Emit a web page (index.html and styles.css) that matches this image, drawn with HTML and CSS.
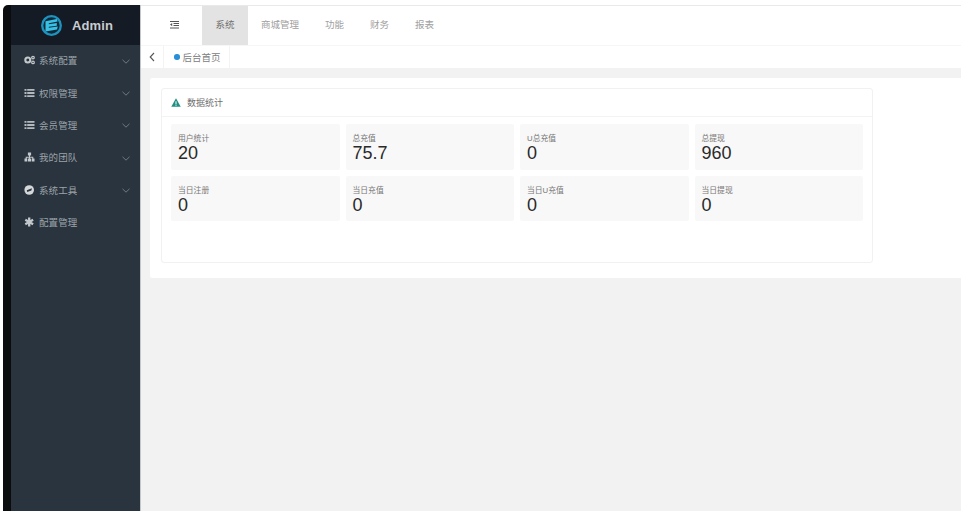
FILE: index.html
```html
<!DOCTYPE html>
<html lang="zh-CN">
<head>
<meta charset="utf-8">
<title>Admin</title>
<link rel="stylesheet" href="styles.css">
</head>
<body>
<div class="app">
  <div class="frame"></div>
  <aside class="sidebar">
    <div class="brand">
      <svg class="logo" viewBox="0 0 21 21" width="21" height="21">
        <circle cx="10.500" cy="10.500" r="9.300" fill="#0e2a38" stroke="#1f93c0" stroke-width="2.300"/>
        <path d="M4.500 6.300 15.800 3.900 16.600 6.400 7.800 8.200 7.800 9.200 15.800 8 15.800 10.800 7.800 11.800 7.800 12.800 16.800 11.600 16 14.600 4.500 16.600Z" fill="#38c0e6"/>
      </svg>
      <span class="brand-name">Admin</span>
    </div>
    <nav class="menu">
      <a class="menu-item">
        <svg class="mi" viewBox="0 0 11 10"><circle cx="3.800" cy="5" r="2.500" fill="none" stroke="#c3c8cc" stroke-width="2.100"/><circle cx="9" cy="2.600" r="1.300" fill="none" stroke="#c3c8cc" stroke-width="1.200"/><circle cx="9" cy="7.400" r="1.300" fill="none" stroke="#c3c8cc" stroke-width="1.200"/></svg>
        <span class="ml">系统配置</span>
        <svg class="chev" viewBox="0 0 8 5"><path d="M.5.8 4 4.2 7.500.8" fill="none" stroke="#77818a" stroke-width=".9"/></svg>
      </a>
      <a class="menu-item">
        <svg class="mi" viewBox="0 0 11 10"><path d="M.5 1h2v1.800h-2zM3.200 1h7.300v1.800H3.200zM.5 4.100h2v1.800h-2zM3.200 4.100h7.300v1.800H3.200zM.5 7.200h2V9h-2zM3.200 7.200h7.300V9H3.200z" fill="#b4b9be"/></svg>
        <span class="ml">权限管理</span>
        <svg class="chev" viewBox="0 0 8 5"><path d="M.5.8 4 4.2 7.500.8" fill="none" stroke="#77818a" stroke-width=".9"/></svg>
      </a>
      <a class="menu-item">
        <svg class="mi" viewBox="0 0 11 10"><path d="M.5 1h2v1.800h-2zM3.200 1h7.300v1.800H3.200zM.5 4.100h2v1.800h-2zM3.200 4.100h7.300v1.800H3.200zM.5 7.200h2V9h-2zM3.200 7.200h7.300V9H3.200z" fill="#b4b9be"/></svg>
        <span class="ml">会员管理</span>
        <svg class="chev" viewBox="0 0 8 5"><path d="M.5.8 4 4.2 7.500.8" fill="none" stroke="#77818a" stroke-width=".9"/></svg>
      </a>
      <a class="menu-item">
        <svg class="mi" viewBox="0 0 11 10"><path d="M3.900.5h3.200v3H6v1.200h3.300v1.800h1.200V9.500H7.700V6.500h.6V5.700H6v.8h1v3H4v-3h1v-.8H2.700v.8h.6v3H.5V6.500h1.200V4.700H5V3.500H3.900z" fill="#c3c8cc"/></svg>
        <span class="ml">我的团队</span>
        <svg class="chev" viewBox="0 0 8 5"><path d="M.5.8 4 4.2 7.500.8" fill="none" stroke="#77818a" stroke-width=".9"/></svg>
      </a>
      <a class="menu-item">
        <svg class="mi" viewBox="0 0 11 10"><circle cx="5.200" cy="5" r="4.800" fill="#d5d8db"/><path d="M2.800 5.200 7.900 3.200 7.400 5.600 3.200 7z" fill="#2a343e"/></svg>
        <span class="ml">系统工具</span>
        <svg class="chev" viewBox="0 0 8 5"><path d="M.5.8 4 4.200 7.500.8" fill="none" stroke="#77818a" stroke-width=".9"/></svg>
      </a>
      <a class="menu-item">
        <svg class="mi" viewBox="0 0 11 10"><path d="M5.200.5v9M1.300 2.750l7.800 4.500M9.100 2.750l-7.800 4.500" stroke="#c3c8cc" stroke-width="2.300" fill="none"/></svg>
        <span class="ml">配置管理</span>
      </a>
    </nav>
  </aside>
  <main class="main">
    <header class="topbar">
      <div class="toggle">
        <svg viewBox="0 0 9 8" width="9" height="8"><path d="M0 .5h9M3.500 2.500H9M3.500 4.500H9M0 7h9" stroke="#555" stroke-width="1" fill="none"/><path d="M2.200 2v3.200L0 3.600z" fill="#555"/></svg>
      </div>
      <a class="tab active">系统</a>
      <a class="tab">商城管理</a>
      <a class="tab">功能</a>
      <a class="tab">财务</a>
      <a class="tab">报表</a>
    </header>
    <div class="tabsbar">
      <div class="back"><svg viewBox="0 0 6 10" width="6" height="10"><path d="M5 1 1.200 5 5 9" fill="none" stroke="#555" stroke-width="1.100"/></svg></div>
      <div class="page-tab"><i class="dot"></i>后台首页</div>
    </div>
    <section class="content">
      <div class="panel">
        <div class="card">
          <div class="card-head">
            <svg viewBox="0 0 12 11" width="10" height="9"><path d="M6 .3 11.800 10.700H.2z" fill="#1f8f84"/><path d="M5.400 4h1.200v3.600H5.400zM5.400 8.200h1.200v1.200H5.400z" fill="#fff"/></svg>
            <span>数据统计</span>
          </div>
          <div class="stats">
            <div class="stat"><p class="stat-label">用户统计</p><p class="stat-value">20</p></div>
            <div class="stat"><p class="stat-label">总充值</p><p class="stat-value">75.7</p></div>
            <div class="stat"><p class="stat-label">U总充值</p><p class="stat-value">0</p></div>
            <div class="stat"><p class="stat-label">总提现</p><p class="stat-value">960</p></div>
            <div class="stat"><p class="stat-label">当日注册</p><p class="stat-value">0</p></div>
            <div class="stat"><p class="stat-label">当日充值</p><p class="stat-value">0</p></div>
            <div class="stat"><p class="stat-label">当日U充值</p><p class="stat-value">0</p></div>
            <div class="stat"><p class="stat-label">当日提现</p><p class="stat-value">0</p></div>
          </div>
        </div>
      </div>
    </section>
  </main>
</div>
</body>
</html>
```

FILE: styles.css
```css
* { box-sizing: border-box; }
html, body { height: 100%; }
body {
  margin: 0;
  background: #fff;
  font-family: "Liberation Sans", "Noto Sans CJK SC", sans-serif;
  overflow: hidden;
}
.app {
  display: flex;
  height: 511px;
  padding: 5px 0 0 3px;
}
.frame {
  flex: 0 0 8px;
  background: #0b0c0e;
  border-top-left-radius: 5px;
}
.sidebar {
  flex: 0 0 130px;
  background: #2a343e;
  border-right: 1px solid #c4c8cc;
}
.brand {
  height: 40px;
  background: #141b24;
  display: flex;
  align-items: center;
  padding: 1px 0 0 30px;
  gap: 10px;
}
.logo { flex: none; }
.brand-name {
  color: #c9ccd0;
  font-size: 13px;
  font-weight: 700;
  letter-spacing: .1px;
}
.menu { display: flex; flex-direction: column; }
.menu-item {
  height: 32.400px;
  display: flex;
  align-items: center;
  padding: 0 0 2px 13px;
  color: #9ca3a9;
  font-size: 9.500px;
}
.mi { width: 11px; height: 10px; flex: none; margin-right: 4px; }
.ml { flex: 1; letter-spacing: .1px; }
.chev { width: 8px; height: 5px; flex: none; margin: 2px 10px 0 0; }
.main {
  flex: 1;
  display: flex;
  flex-direction: column;
  min-width: 0;
  background: #f2f2f2;
}
.topbar {
  height: 40px;
  display: flex;
  align-items: flex-start;
  background: #fff;
  border-top: 1px solid #e9e9e9;
  padding-left: 28px;
}
.toggle { width: 33px; display: flex; margin: 15px 0 0 1px; }
.tab {
  color: #a0a0a0;
  font-size: 9.500px;
  padding: 0 13px 3px;
  height: 39px;
  display: flex;
  align-items: center;
}
.tab.active {
  background: #e3e3e3;
  color: #707070;
  width: 46px;
  justify-content: center;
  margin-left: -1px;
}
.tabsbar {
  height: 23px;
  display: flex;
  align-items: stretch;
  background: #fff;
  border-top: 1px solid #f6f6f6;
}
.back {
  width: 23px;
  display: flex;
  align-items: center;
  justify-content: center;
  border-right: 1px solid #f3f3f3;
}
.page-tab {
  display: flex;
  align-items: center;
  padding: 0 8px 0 10px;
  color: #808080;
  font-size: 9.500px;
  border-right: 1px solid #f3f3f3;
}
.dot {
  width: 5.500px;
  height: 5.500px;
  border-radius: 50%;
  background: #2b8fd8;
  margin-right: 3px;
}
.content {
  padding: 10px 0 0 9px;
}
.panel {
  background: #fff;
  height: 200px;
  border-radius: 2px 0 0 2px;
  padding: 10px 88px 0 11px;
}
.card {
  height: 175px;
  border: 1px solid #f1f1f1;
  border-radius: 3px;
}
.card-head {
  height: 28px;
  border-bottom: 1px solid #f3f3f3;
  display: flex;
  align-items: center;
  padding: 0 0 0 9px;
  gap: 6px;
  color: #6e6e6e;
  font-size: 9px;
}
.stats {
  display: grid;
  grid-template-columns: repeat(4, 168.500px);
  column-gap: 6px;
  row-gap: 6px;
  padding: 7px 0 0 9px;
}
.stat {
  height: 45.600px;
  background: #f8f8f8;
  padding: 10px 7px 0;
  border-radius: 2px;
}
.stat-label {
  margin: 0;
  color: #777;
  font-size: 7.800px;
  line-height: 10px;
}
.stat-value {
  margin: 0;
  color: #2a2a2a;
  font-size: 18px;
  line-height: 19px;
}
```
